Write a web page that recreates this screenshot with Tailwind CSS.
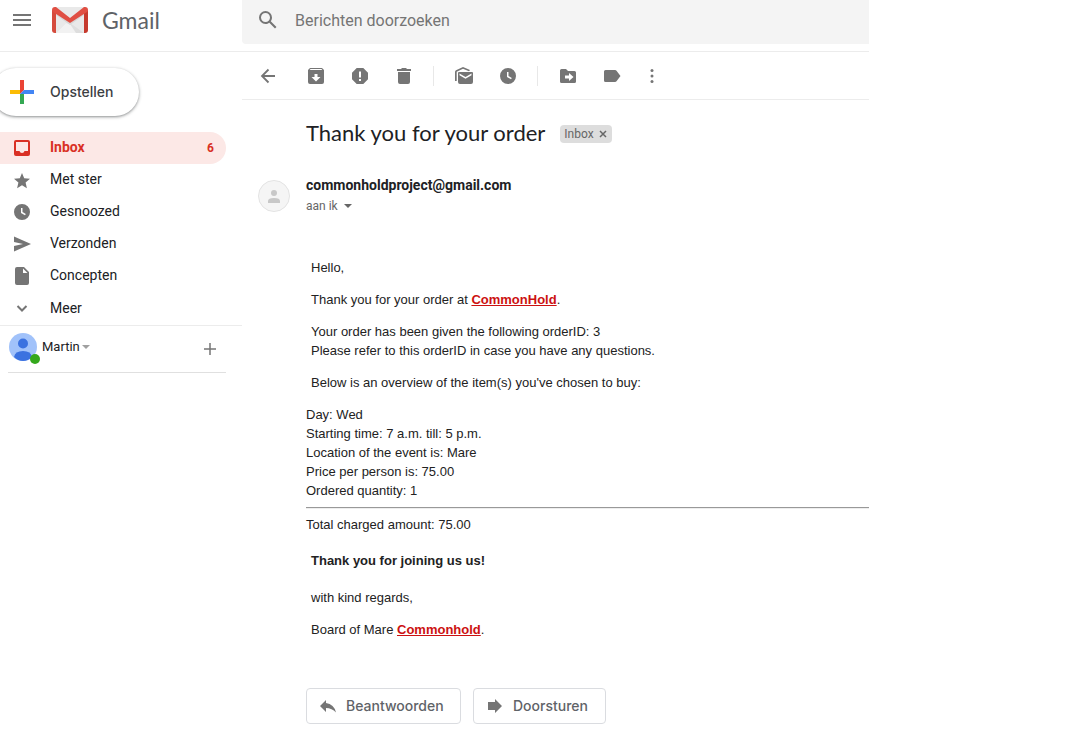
<!DOCTYPE html>
<html lang="nl">
<head>
<meta charset="utf-8">
<meta name="viewport" content="width=device-width, initial-scale=1">
<title>Thank you for your order - Gmail</title>
<script src="https://cdn.jsdelivr.net/npm/@tailwindcss/browser@4"></script>
</head>
<body class="bg-white pr-[219px] font-[Roboto,sans-serif] text-[#202124]">
<header class="flex h-13 items-start border-b border-[#ececec]">
  <div class="flex h-10 w-[242px] shrink-0 items-center pl-2.5">
    <button type="button" aria-label="Hoofdmenu" class="text-[#757575]"><svg class="size-6" viewBox="0 0 24 24" fill="currentColor"><path d="M3 18h18v-2H3v2zm0-5h18v-2H3v2zm0-7v2h18V6H3z"/></svg></button>
    <svg class="ml-4.5 h-[26px] w-9" viewBox="0 0 36 26" aria-hidden="true">
      <path d="M2 0h32v26H2z" fill="#e9e9e9"/><path d="M4 26 15 15l3 1 14 10z" fill="#dedede"/><path d="M4 26 14 16l4 1 6 9z" fill="#f2f2f2"/><path d="M4 6 18 16 32 6v2L18 18 4 8z" fill="#d8d8d8"/>
      <path d="M0 3v20q0 3 3 3h1V4z" fill="#d54b3d"/><path d="M36 3v20q0 3-3 3h-1V4z" fill="#c63a2e"/>
      <path d="M0 3Q0 0 3 0h1l14 11L32 0h1q3 0 3 3 0 1-1 2L18 16 1 5Q0 4 0 3z" fill="#e04f43"/>
    </svg>
    <span class="ml-3.5 font-[Lato,sans-serif] text-[23px] leading-7 text-[#5f6368]">Gmail</span>
  </div>
  <label class="flex h-11 min-w-0 flex-1 items-center rounded-bl bg-[#f4f4f4] pb-1 pl-3.5 text-[#757575]">
    <svg class="size-6 shrink-0" viewBox="0 0 24 24" fill="currentColor" aria-hidden="true"><path d="M20.49 19l-5.73-5.73C15.53 12.2 16 10.91 16 9.5A6.5 6.5 0 1 0 9.5 16c1.41 0 2.7-.47 3.77-1.24L19 20.49 20.49 19zM5 9.5C5 7.01 7.01 5 9.5 5S14 7.01 14 9.5 11.99 14 9.5 14 5 11.99 5 9.5z"/></svg>
    <input type="text" aria-label="Berichten doorzoeken" placeholder="Berichten doorzoeken" class="ml-[15px] min-w-0 flex-1 bg-transparent pt-0.5 text-base outline-none placeholder:text-[#757575]">
  </label>
</header>
<div class="flex items-start">
  <aside class="w-[242px] shrink-0 pt-4">
    <button type="button" class="-ml-2 flex h-12 w-[147px] items-center rounded-full bg-white pl-4 shadow-[0_1px_2px_0_rgba(60,64,67,0.35),0_1px_3px_1px_rgba(60,64,67,0.2)]">
      <svg class="ml-0.5 size-6" viewBox="0 0 24 24" aria-hidden="true"><path fill="#ea4335" d="M10 0h4v10l-4 4z"/><path fill="#fbbc04" d="M0 10h10v4H0z"/><path fill="#34a853" d="M10 14h4v10h-4z"/><path fill="#4285f4" d="M14 10h10v4H10z"/></svg>
      <span class="ml-4 font-[Inter,sans-serif] text-sm font-medium text-[#3c4043]">Opstellen</span>
    </button>
    <nav class="mt-4 border-b border-[#ececec] pb-px text-sm text-[#202124]">
      <a href="#inbox" class="mr-4 flex h-8 items-center rounded-r-full bg-[#fce8e6] pr-3 pl-3 font-bold text-[#d93025]"><svg class="size-5" viewBox="0 0 20 20" fill="currentColor"><path fill-rule="evenodd" d="M4 2h12q2 0 2 2v12q0 2-2 2H4q-2 0-2-2V4q0-2 2-2zm0 2v9h3.500q.5 2 2.500 2t2.500-2H16V4z"/></svg><span class="ml-[18px] flex-1 pb-0.5">Inbox</span><span class="text-xs">6</span></a>
      <a href="#starred" class="flex h-8 items-center pl-3"><svg class="size-5 text-[#757575]" viewBox="0 0 20 20" fill="currentColor"><path d="M10 15.200 14.900 18.200 13.600 12.600 18 8.800l-5.800-.5L10 3 7.800 8.300 2 8.800l4.400 3.800L5.100 18.200z"/></svg><span class="ml-[18px] pb-0.5">Met ster</span></a>
      <a href="#snoozed" class="flex h-8 items-center pl-3"><svg class="size-5 text-[#757575]" viewBox="0 0 20 20" fill="currentColor"><path fill-rule="evenodd" d="M10 2a8 8 0 1 0 0 16 8 8 0 0 0 0-16zM9 6h1.500v4l3.300 2-.8 1.300L9 11z"/></svg><span class="ml-[18px] pb-0.5">Gesnoozed</span></a>
      <a href="#sent" class="flex h-8 items-center pl-3"><svg class="size-5 text-[#757575]" viewBox="0 0 20 20" fill="currentColor"><path d="M2 2.500V8l9 2-9 2v5.500L19 10z"/></svg><span class="ml-[18px] pb-0.5">Verzonden</span></a>
      <a href="#drafts" class="flex h-8 items-center pl-3"><svg class="size-5 text-[#757575]" viewBox="0 0 20 20" fill="currentColor"><path fill-rule="evenodd" d="M5 1h7l5 5v11q0 2-2 2H5q-2 0-2-2V3q0-2 2-2zm6 1.500V7h4.500z"/></svg><span class="ml-[18px] pb-0.5">Concepten</span></a>
      <a href="#more" class="flex h-8 items-center pl-3"><svg class="size-5 text-[#757575]" viewBox="0 0 20 20" fill="none" stroke="currentColor" stroke-width="2"><path d="M5.500 8 10 12.500 14.500 8"/></svg><span class="ml-[18px]">Meer</span></a>
    </nav>
    <div class="mr-4 ml-2 flex h-[47px] items-center border-b border-[#e0e0e0] pb-0.5 pl-px">
      <svg class="size-8" viewBox="0 0 32 32" aria-hidden="true"><circle cx="14" cy="15" r="14" fill="#a1c2fa"/><circle cx="14" cy="11.500" r="5" fill="#3b72e0"/><path d="M5 25q1-6 9-6t9 6q-4 4-9 4t-9-4z" fill="#3b72e0"/><circle cx="26" cy="27" r="5" fill="#34a81c"/></svg>
      <button type="button" class="ml-px flex items-center gap-0.5 pb-0.5 text-[13px]">Martin<svg class="h-1 w-2 text-[#a0a0a0]" viewBox="0 0 8 4" fill="currentColor"><path d="M0 0h8L4 4z"/></svg></button>
      <button type="button" aria-label="Nieuw gesprek" class="mt-0.5 mr-2.5 ml-auto text-[#757575]"><svg class="size-3" viewBox="0 0 12 12" stroke="currentColor" stroke-width="1.500"><path d="M6 0v12M0 6h12"/></svg></button>
    </div>
  </aside>
  <main class="min-w-0 flex-1">
    <div class="flex h-12 items-center border-b border-[#ececec] pl-4 text-[#757575]">
      <button type="button" aria-label="Terug"><svg class="size-5" viewBox="0 0 20 20" fill="none" stroke="currentColor" stroke-width="1.800"><path d="M17 10H4.500M10.500 3.500 4 10l6.500 6.500"/></svg></button>
      <button type="button" aria-label="Archiveren" class="ml-7"><svg class="size-5" viewBox="0 0 20 20" fill="currentColor"><path fill-rule="evenodd" d="M4 2h12l2 2v12q0 2-2 2H4q-2 0-2-2V4zm.5 1-.8 1h12.600l-.8-1zM8.500 8v3H5.500L10 15.500 14.500 11h-3V8z"/></svg></button>
      <button type="button" aria-label="Spam melden" class="ml-6"><svg class="size-5" viewBox="0 0 20 20" fill="currentColor"><path fill-rule="evenodd" d="M6.700 2h6.600L18 6.700v6.600L13.300 18H6.700L2 13.300V6.700zM9 5.500v6h2v-6zm0 7.500v2h2v-2z"/></svg></button>
      <button type="button" aria-label="Verwijderen" class="ml-6"><svg class="size-5" viewBox="0 0 20 20" fill="currentColor"><path d="M3 3h4l1-1h4l1 1h4v2H3zM4 6h12v10q0 2-2 2H6q-2 0-2-2z"/></svg></button>
      <span class="ml-[19px] h-5 w-px bg-[#e8e8e8]"></span>
      <button type="button" aria-label="Markeren als ongelezen" class="ml-5"><svg class="size-5" viewBox="0 0 20 20" fill="currentColor"><path d="M1 15V6q0-1 1-1.700L9 1l7 3-1 1.300L9 2.700 2.700 5.700V15z"/><path fill-rule="evenodd" d="M5 6h13q1 0 1 1v9q0 2-2 2H6q-2 0-2-2V7q0-1 1-1zm.5 1.500v1.700l6 3.600 6-3.600V7.500l-6 3.600z"/></svg></button>
      <button type="button" aria-label="Snoozen" class="ml-6"><svg class="size-5" viewBox="0 0 20 20" fill="currentColor"><path fill-rule="evenodd" d="M10 2a8 8 0 1 0 0 16 8 8 0 0 0 0-16zM9 6h1.500v4l3.300 2-.8 1.300L9 11z"/></svg></button>
      <span class="ml-[19px] h-5 w-px bg-[#e8e8e8]"></span>
      <button type="button" aria-label="Verplaatsen naar" class="ml-5"><svg class="size-5" viewBox="0 0 20 20" fill="currentColor"><path fill-rule="evenodd" d="M3.500 3H8l2 2h6.500Q18 5 18 6.500v9q0 1.500-1.500 1.500h-13Q2 17 2 15.500v-11Q2 3 3.500 3zM11 7v2.500H7v3h4V15l4.500-4z"/></svg></button>
      <button type="button" aria-label="Labels" class="ml-6"><svg class="size-5" viewBox="0 0 20 20" fill="currentColor"><path d="M3.500 4H13q1 0 1.500.7L18.500 10l-4 5.300q-.5.7-1.500.7H3.500Q2 16 2 14.500v-9Q2 4 3.500 4z"/></svg></button>
      <button type="button" aria-label="Meer" class="ml-5"><svg class="size-5" viewBox="0 0 20 20" fill="currentColor"><circle cx="10" cy="4.500" r="1.500"/><circle cx="10" cy="10" r="1.500"/><circle cx="10" cy="15.500" r="1.500"/></svg></button>
    </div>
    <div class="flex items-center pt-5 pl-16">
      <h1 class="pb-0.5 font-[Lato,sans-serif] text-[22px] leading-[26px]">Thank you for your order</h1>
      <span class="ml-[15px] flex h-[18px] items-center gap-1 rounded-sm bg-[#ddd] px-1 text-xs text-[#666]">Inbox<button type="button" aria-label="Label verwijderen" class="p-px"><svg class="size-2" viewBox="0 0 8 8" stroke="currentColor" stroke-width="1.500"><path d="M1 1l6 6M7 1 1 7"/></svg></button></span>
    </div>
    <div class="flex pt-7 pl-4">
      <svg class="mt-1 size-8" viewBox="0 0 32 32" aria-hidden="true"><circle cx="16" cy="16" r="15.500" fill="#f5f5f5" stroke="#e3e3e3"/><circle cx="16" cy="13" r="3" fill="#c8c8c8"/><path d="M10 23v-2q0-3 6-3t6 3v2z" fill="#c8c8c8"/></svg>
      <div class="ml-4">
        <p class="pb-0.5 text-sm leading-[18px] font-bold">commonholdproject@gmail.com</p>
        <button type="button" class="flex h-5 items-center gap-1.5 text-xs text-[#666]">aan ik<svg class="h-1 w-2" viewBox="0 0 8 4" fill="currentColor"><path d="M0 0h8L4 4z"/></svg></button>
      </div>
    </div>
    <article class="pt-[42px] pl-16 font-['Liberation_Sans',Arial,sans-serif] text-[13px] leading-[19px] text-[#222]">
      <div class="space-y-[13px] pl-[5px]">
        <p>Hello,</p>
        <p>Thank you for your order at <a href="#commonhold" class="font-bold text-[#c11] underline">CommonHold</a>.</p>
        <p>Your order has been given the following orderID: 3<br>Please refer to this orderID in case you have any questions.</p>
        <p>Below is an overview of the item(s) you've chosen to buy:</p>
      </div>
      <p class="mt-[13px]">Day: Wed<br>Starting time: 7 a.m. till: 5 p.m.<br>Location of the event is: Mare<br>Price per person is: 75.00<br>Ordered quantity: 1</p>
      <hr class="mt-[7px] mb-1.5 border-t border-b border-t-[#999] border-b-[#eee]">
      <p>Total charged amount: 75.00</p>
      <div class="pl-[5px]">
        <p class="mt-[17px] font-bold">Thank you for joining us us!</p>
        <p class="mt-[18px]">with kind regards,</p>
        <p class="mt-[13px]">Board of Mare <a href="#commonhold" class="font-bold text-[#c11] underline">Commonhold</a>.</p>
      </div>
    </article>
    <div class="flex gap-3 pt-[49px] pb-3 pl-16 font-[Inter,sans-serif] text-sm font-medium text-[#5f6368]">
      <button type="button" class="flex h-9 w-[155px] items-center rounded border border-[#dadce0] pl-3"><svg class="size-[18px] text-[#757575]" viewBox="0 0 18 18" fill="currentColor"><path d="M7 6V3L1 9l6 6v-4q6 0 10 4.500Q15 7 7 6z"/></svg><span class="ml-[9px]">Beantwoorden</span></button>
      <button type="button" class="flex h-9 w-[133px] items-center rounded border border-[#dadce0] pl-3"><svg class="size-[18px] text-[#757575]" viewBox="0 0 18 18" fill="currentColor"><path d="M2 5h7V2l7 7-7 7v-3H2z"/></svg><span class="ml-[9px]">Doorsturen</span></button>
    </div>
  </main>
</div>
</body>
</html>
